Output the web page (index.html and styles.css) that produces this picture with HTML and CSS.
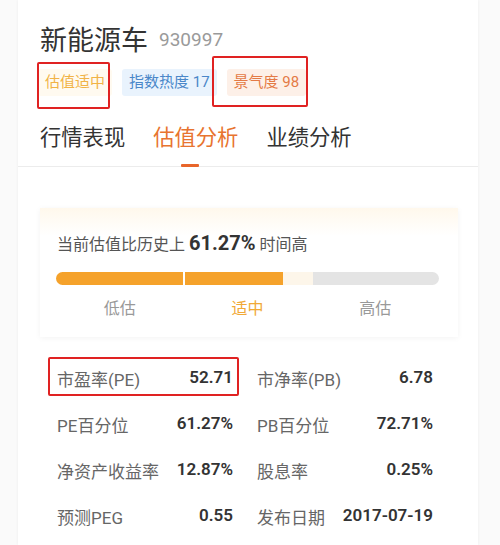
FILE: index.html
```html
<!DOCTYPE html>
<html lang="zh">
<head>
<meta charset="utf-8">
<link rel="stylesheet" href="styles.css">
</head>
<body>
<div class="card">
  <div class="head">
    <div class="title-row"><span class="name">新能源车</span><span class="code">930997</span></div>
    <div class="tags">
      <span class="tag tag-yellow">估值适中</span>
      <span class="tag tag-blue">指数热度 17</span>
      <span class="tag tag-orange">景气度 98</span>
    </div>
    <div class="tabs">
      <span class="tab">行情表现</span>
      <span class="tab active">估值分析</span>
      <span class="tab">业绩分析</span>
    </div>
  </div>
  <div class="content">
    <div class="gauge">
      <div class="gauge-text">当前估值比历史上 <b>61.27%</b> 时间高</div>
      <div class="bar">
        <span class="seg seg1"></span>
        <span class="seg seg2"></span>
        <span class="seg seg3"></span>
        <span class="seg seg4"></span>
      </div>
      <div class="bar-labels">
        <span>低估</span>
        <span class="mid">适中</span>
        <span>高估</span>
      </div>
    </div>
    <div class="metrics">
      <div class="metric"><span class="label">市盈率(PE)</span><span class="value">52.71</span></div>
      <div class="metric"><span class="label">市净率(PB)</span><span class="value">6.78</span></div>
      <div class="metric"><span class="label">PE百分位</span><span class="value">61.27%</span></div>
      <div class="metric"><span class="label">PB百分位</span><span class="value">72.71%</span></div>
      <div class="metric"><span class="label">净资产收益率</span><span class="value">12.87%</span></div>
      <div class="metric"><span class="label">股息率</span><span class="value">0.25%</span></div>
      <div class="metric"><span class="label">预测PEG</span><span class="value">0.55</span></div>
      <div class="metric"><span class="label">发布日期</span><span class="value">2017-07-19</span></div>
    </div>
  </div>
  <div class="mark mark1"></div>
  <div class="mark mark2"></div>
  <div class="mark mark3"></div>
</div>
</body>
</html>
```
FILE: styles.css
```css
html, body {
  margin: 0;
  padding: 0;
}
body {
  background: #fafafa;
  font-family: Roboto, "Noto Sans CJK SC", sans-serif;
  color: #333;
  width: 500px;
  height: 545px;
  overflow: hidden;
}
.card {
  position: relative;
  margin-left: 18px;
  width: 460px;
  height: 545px;
  background: #fff;
  box-shadow: 0 0 3px rgba(0,0,0,0.06);
}
.head {
  padding: 24px 0 0 22px;
  border-bottom: 1px solid #ececec;
}
.title-row {
  display: flex;
  align-items: center;
  gap: 11px;
  height: 34px;
}
.name {
  font-size: 27px;
  color: #333;
  line-height: 34px;
}
.code {
  font-size: 19px;
  color: #9a9a9a;
  line-height: 34px;
  position: relative;
  top: -1px;
}
.tags {
  display: flex;
  gap: 10px;
  margin-top: 11px;
  margin-left: -2px;
}
.tag {
  font-size: 15px;
  line-height: 27px;
  height: 27px;
  padding: 0 7px;
  border-radius: 3px;
}
.tag-yellow {
  color: #f1b346;
  background: #fffaf0;
}
.tag-blue {
  color: #4a87c9;
  background: #e9f3fd;
}
.tag-orange {
  color: #e47a45;
  background: #fdf0e8;
}
.tabs {
  display: flex;
  gap: 28px;
  margin-top: 27px;
}
.tab {
  position: relative;
  font-size: 21.3px;
  line-height: 30px;
  padding-bottom: 13px;
  color: #333;
}
.tab.active {
  color: #e8742f;
}
.tab.active::after {
  content: "";
  position: absolute;
  left: 28px;
  bottom: -1px;
  width: 18px;
  height: 3px;
  border-radius: 1px;
  background: #e8652a;
}
.content {
  padding: 41px 20px 0 22px;
}
.gauge {
  background: linear-gradient(#fff8ec, #ffffff 28px);
  box-shadow: 0 1px 6px rgba(0,0,0,0.05);
  padding: 23px 19px 17px 16px;
}
.gauge-text {
  font-size: 16px;
  line-height: 24px;
  color: #555;
  padding-left: 1px;
}
.gauge-text b {
  font-size: 20px;
  color: #333;
  font-weight: 700;
}
.bar {
  display: flex;
  height: 13px;
  margin-top: 15px;
  border-radius: 7px;
  overflow: hidden;
}
.seg1 {
  width: 127px;
  background: #f5a22b;
  margin-right: 2px;
}
.seg2 {
  width: 98px;
  background: #f5a22b;
}
.seg3 {
  width: 30px;
  background: #fdf6ea;
}
.seg4 {
  flex: 1;
  background: #e4e4e4;
}
.bar-labels {
  display: grid;
  grid-template-columns: 1fr 1fr 1fr;
  margin-top: 13px;
  font-size: 16px;
  line-height: 22px;
  color: #999;
  text-align: center;
}
.bar-labels .mid {
  color: #f1a937;
}
.metrics {
  display: grid;
  grid-template-columns: 176px 176px;
  column-gap: 24px;
  margin-top: 20px;
  padding-left: 17px;
}
.metric {
  display: flex;
  justify-content: space-between;
  align-items: center;
  height: 46px;
}
.label {
  font-size: 17px;
  color: #666;
  line-height: 24px;
}
.value {
  font-size: 17px;
  font-weight: 600;
  color: #333;
  line-height: 24px;
  padding-bottom: 7px;
}
.mark {
  position: absolute;
  border: 2px solid #e02222;
  border-radius: 2px;
  box-sizing: border-box;
}
.mark1 {
  left: 19px;
  top: 62px;
  width: 73px;
  height: 47px;
}
.mark2 {
  left: 194px;
  top: 56px;
  width: 96px;
  height: 51px;
}
.mark3 {
  left: 30px;
  top: 357px;
  width: 191px;
  height: 39px;
}
```
